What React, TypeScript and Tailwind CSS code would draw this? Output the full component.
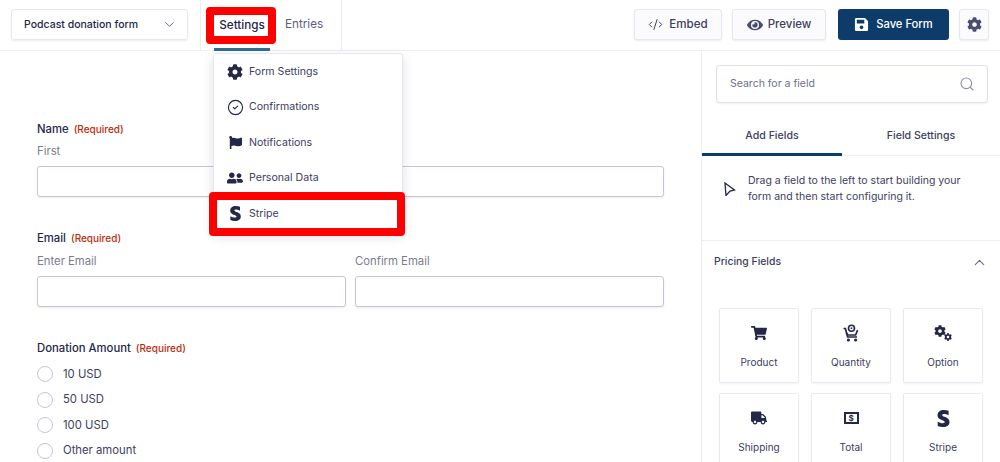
import React from 'react';
import { ChevronDown, ChevronUp, CodeXml, Search, CircleCheck } from 'lucide-react';
import { FaCog, FaEye, FaFlag, FaSave, FaShoppingCart, FaStripeS, FaTruck, FaUserFriends } from 'react-icons/fa';

const font = 'font-["Inter","Liberation_Sans",sans-serif]';

const Required = () => <span className="text-[10px] text-[#c02b0a]">(Required)</span>;

const Input = ({ className = '' }: { className?: string }) => (
  <div className={`h-[31px] rounded-[3px] border border-[#c5c6d6] bg-white shadow-[0_1px_2px_rgba(18,18,60,0.08)] ${className}`} />
);

const QuantityIcon = () => (
  <svg viewBox="0 0 16 18" className="h-[18px] w-[16px]" fill="none" stroke="#242748">
    <circle cx="8.5" cy="4.2" r="3" strokeWidth="1.6" />
    <circle cx="8.5" cy="4.2" r="0.9" fill="#242748" stroke="none" />
    <path d="M0.5 4.5H2.4L4.6 13H14" strokeWidth="1.7" />
    <path d="M3.2 8.8 5 11H12.6L14.6 6.2" strokeWidth="1.7" />
    <circle cx="5.4" cy="16" r="1.6" fill="#242748" stroke="none" />
    <circle cx="12.6" cy="16" r="1.6" fill="#242748" stroke="none" />
  </svg>
);

const OptionIcon = () => (
  <div className="flex items-start">
    <FaCog className="h-[12px] w-[12px]" />
    <FaCog className="-ml-[2px] mt-[8px] h-[8px] w-[8px]" />
  </div>
);

const TotalIcon = () => (
  <div className="flex h-[12px] w-[15px] items-center justify-center border-2 border-[#242748] text-[8px] font-bold leading-none text-[#242748]">$</div>
);

const menuItems = [
  { label: 'Form Settings', icon: <FaCog className="h-[16px] w-[16px]" /> },
  { label: 'Confirmations', icon: <CircleCheck className="h-[17px] w-[17px]" strokeWidth={1.6} /> },
  { label: 'Notifications', icon: <FaFlag className="h-[13px] w-[13px]" /> },
  { label: 'Personal Data', icon: <FaUserFriends className="h-[16px] w-[16px]" /> },
  { label: 'Stripe', icon: <FaStripeS className="h-[15px] w-[15px]" /> },
];

const fields = [
  { label: 'Product', icon: <FaShoppingCart className="h-[16px] w-[16px]" /> },
  { label: 'Quantity', icon: <QuantityIcon /> },
  { label: 'Option', icon: <OptionIcon /> },
  { label: 'Shipping', icon: <FaTruck className="h-[16px] w-[16px]" /> },
  { label: 'Total', icon: <TotalIcon /> },
  { label: 'Stripe', icon: <FaStripeS className="h-[17px] w-[17px]" /> },
];

export default function App() {
  return (
    <div className={`relative h-[462px] w-[1000px] overflow-hidden bg-white text-[#242748] ${font}`}>
      {/* top bar */}
      <div className="flex h-[51px] items-stretch border-b border-[#eceef4]">
        <div className="flex w-[201px] items-start border-r border-[#eceef4] pl-[11px] pt-[9px]">
          <div className="flex h-[31px] w-[177px] items-center justify-between rounded-[3px] border border-[#e6e8ef] pl-[12px] pr-[10px] text-[10.5px] font-medium shadow-[0_1px_2px_rgba(18,18,60,0.08)]">
            Podcast donation form
            <ChevronDown className="h-[15px] w-[15px] text-[#5b5e80]" strokeWidth={1.5} />
          </div>
        </div>
        <div className="flex w-[141px] border-r border-[#eceef4] pl-[13px]">
          <div className="flex h-[51px] w-[56px] items-center justify-center border-b-[3px] border-[#2f6f95] pt-[3px] text-[11.7px] font-medium">Settings</div>
          <div className="ml-[15px] flex items-center text-[11.7px] text-[#5b5e80]">Entries</div>
        </div>
        <div className="ml-auto flex items-start pr-[11px] pt-[9px]">
          <div className="flex h-[31px] w-[88px] items-center justify-center gap-[6px] rounded-[3px] border border-[#e6e8ef] bg-[#fbfbfd] text-[11.6px] font-medium text-[#3d4060] shadow-[0_1px_2px_rgba(18,18,60,0.08)]">
            <CodeXml className="h-[15px] w-[15px]" strokeWidth={1.6} />
            Embed
          </div>
          <div className="ml-[10px] flex h-[31px] w-[94px] items-center justify-center gap-[5px] rounded-[3px] border border-[#e6e8ef] bg-[#fbfbfd] text-[11.5px] font-medium text-[#3d4060] shadow-[0_1px_2px_rgba(18,18,60,0.08)]">
            <FaEye className="h-[16px] w-[16px] text-[#4a4d6e]" />
            Preview
          </div>
          <div className="ml-[12px] flex h-[31px] w-[111px] items-center justify-center gap-[7px] rounded-[3px] bg-[#0e3c6a] text-[11.2px] font-medium text-white">
            <FaSave className="h-[15px] w-[15px]" />
            Save Form
          </div>
          <div className="ml-[10px] flex h-[31px] w-[30px] items-center justify-center rounded-[3px] border border-[#e6e8ef] bg-[#fbfbfd] shadow-[0_1px_2px_rgba(18,18,60,0.08)]">
            <FaCog className="h-[15px] w-[15px] text-[#4a4d6e]" />
          </div>
        </div>
      </div>

      <div className="flex h-[411px]">
        {/* form canvas */}
        <div className="w-[702px] border-r border-[#eceef4] pl-[37px] pr-[37px] pt-[70px] text-[11.3px]">
          <div className="flex h-[16px] items-center gap-[5px] font-medium">Name <Required /></div>
          <div className="mt-[6px] h-[16px] leading-[16px] text-[#7a7c8f]">First</div>
          <Input className="mt-[7px] w-[627px]" />

          <div className="mt-[33px] flex h-[16px] items-center gap-[5px] font-medium">Email <Required /></div>
          <div className="mt-[7px] flex gap-[9px] text-[#7a7c8f]">
            <div className="w-[309px] leading-[16px]">Enter Email</div>
            <div className="leading-[16px]">Confirm Email</div>
          </div>
          <div className="mt-[7px] flex gap-[9px]">
            <Input className="w-[309px]" />
            <Input className="w-[309px]" />
          </div>

          <div className="mt-[33px] flex h-[16px] items-center gap-[5px] font-medium">Donation Amount <Required /></div>
          <div className="mt-[10px] flex flex-col gap-[9.6px]">
            {['10 USD', '50 USD', '100 USD', 'Other amount'].map((label) => (
              <div key={label} className="flex h-[16px] items-center gap-[10px] text-[#3d4060]">
                <div className="h-[16px] w-[16px] rounded-full border border-[#c5c6d6]" />
                {label}
              </div>
            ))}
          </div>
        </div>

        {/* sidebar */}
        <div className="flex-1">
          <div className="pl-[14px] pt-[14px]">
            <div className="flex h-[38px] w-[272px] items-center justify-between rounded-[3px] border border-[#dfe1ea] pl-[13px] pr-[12px] text-[10.5px] text-[#6c6f8c] shadow-[0_1px_2px_rgba(18,18,60,0.06)]">
              Search for a field
              <Search className="h-[16px] w-[16px] text-[#8f91a8]" strokeWidth={1.7} />
            </div>
          </div>
          <div className="mt-[14px] flex h-[39px] border-b border-[#eceef4] text-[10.6px] text-[#3d4060]">
            <div className="flex h-[39px] w-[140px] items-center justify-center border-b-[3px] border-[#0e3c6a] pt-[2px] font-medium">Add Fields</div>
            <div className="flex flex-1 items-center justify-center font-medium">Field Settings</div>
          </div>
          <div className="flex h-[85px] border-b border-[#eceef4] pl-[22px] pt-[17px]">
            <svg viewBox="0 0 12 14" className="mt-[9px] h-[14px] w-[12px]" fill="none" stroke="#242748" strokeWidth="1.3">
              <path d="M1 1 10.5 8 6 9 2 13.5z" />
            </svg>
            <div className="ml-[12px] w-[225px] text-[10.5px] leading-[16px] text-[#3d4060]">
              Drag a field to the left to start building your form and then start configuring it.
            </div>
          </div>
          <div className="flex h-[42px] items-center justify-between pl-[12px] pr-[12px]">
            <span className="text-[10.4px] font-medium text-[#3d4060]">Pricing Fields</span>
            <ChevronUp className="h-[17px] w-[17px] text-[#6c6f8c]" strokeWidth={1.5} />
          </div>
          <div className="ml-[17px] mt-[25px] grid w-[264px] grid-cols-3 gap-x-[12px] gap-y-[10px]">
            {fields.map((f) => (
              <div key={f.label} className="flex h-[75px] w-[80px] flex-col items-center rounded-[2px] border border-[#e9eaf1] pt-[15px] shadow-[0_1px_2px_rgba(18,18,60,0.05)]">
                <div className="flex h-[18px] items-center justify-center">{f.icon}</div>
                <div className="mt-[13px] text-[10px] leading-[14px] text-[#3d4060]">{f.label}</div>
              </div>
            ))}
          </div>
        </div>
      </div>

      {/* settings dropdown, over the form */}
      <div className="absolute left-[213px] top-[53px] w-[190px] rounded-[3px] border border-[#e6e8ef] bg-white shadow-[0_4px_12px_rgba(18,18,60,0.12)]">
        {menuItems.map((item) => (
          <div key={item.label} className="flex h-[35.5px] items-center text-[10.6px] text-[#3d4060]">
            <div className="flex w-[35px] justify-center pl-[7px] text-[#242748]">{item.icon}</div>
            {item.label}
          </div>
        ))}
      </div>

      {/* red annotation boxes */}
      <div className="absolute left-[206px] top-[7px] h-[37px] w-[70px] rounded-[4px] border-[8px] border-[#ff0000]" />
      <div className="absolute left-[209px] top-[192px] h-[44px] w-[196px] rounded-[4px] border-[8px] border-[#ff0000]" />
    </div>
  );
}
